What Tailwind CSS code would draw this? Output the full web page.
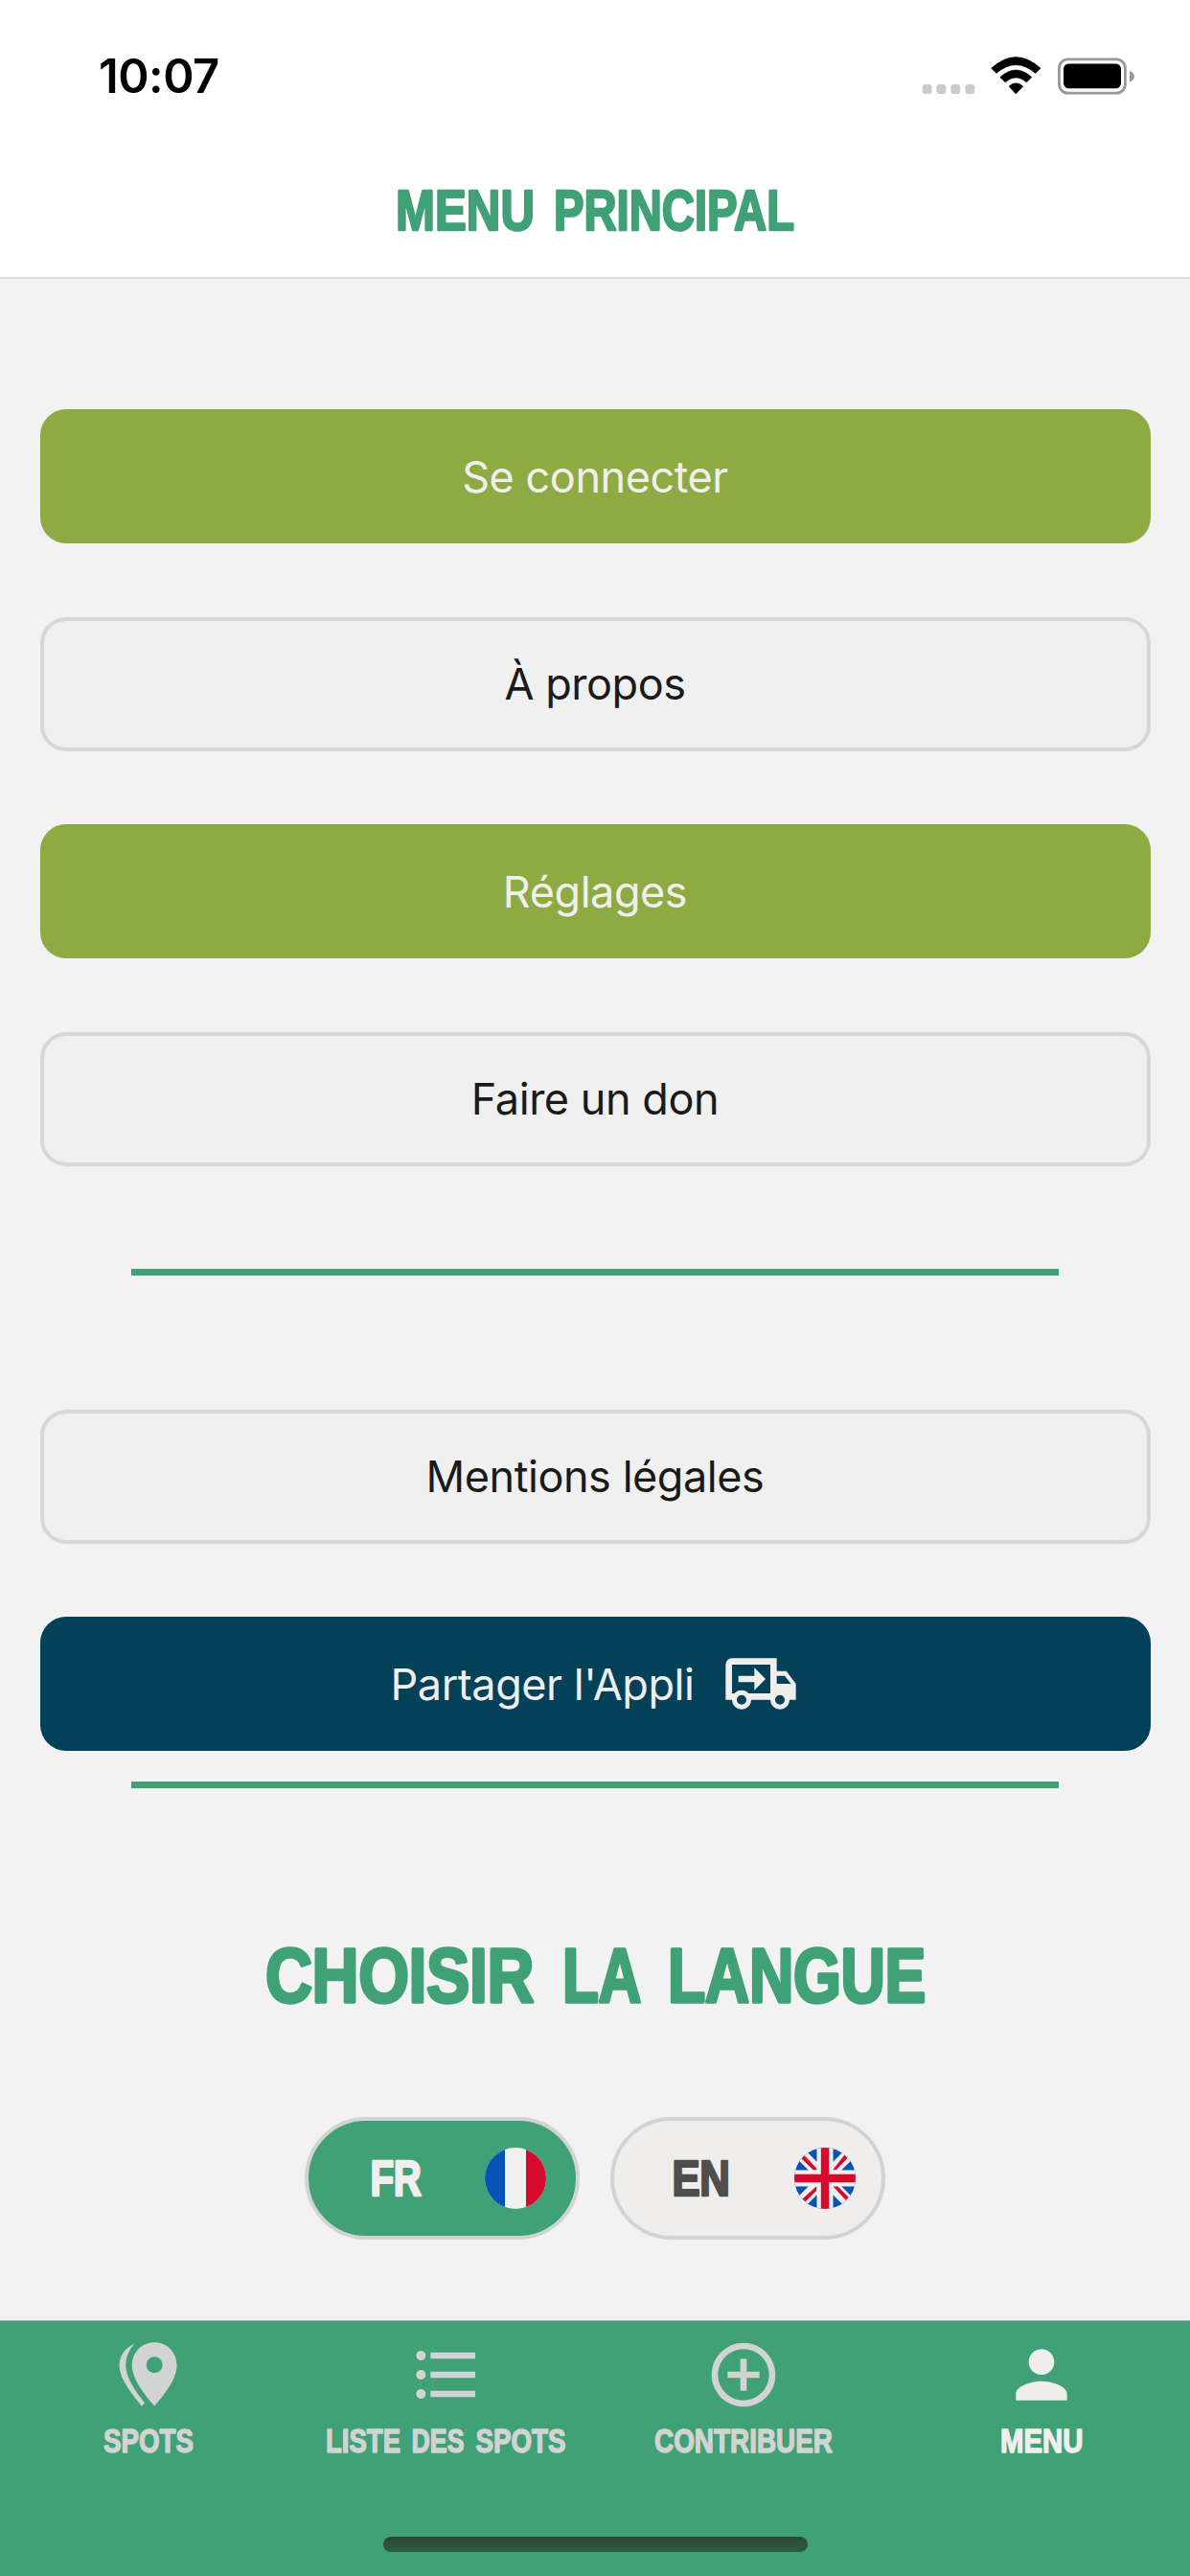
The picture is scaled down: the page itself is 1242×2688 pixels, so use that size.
<!DOCTYPE html>
<html lang="fr">
<head>
<meta charset="utf-8">
<title>Menu principal</title>
<script src="https://cdn.jsdelivr.net/npm/@tailwindcss/browser@4"></script>
</head>
<body class="flex flex-col w-[1242px] h-[2688px] overflow-hidden bg-[#f2f2f2] font-[Inter,sans-serif]">
<header class="h-[291px] shrink-0 bg-white border-b-2 border-[#dedede] flex flex-col">
  <div class="h-[158px] pl-[103px] pr-[58px] flex items-center justify-between">
    <span class="text-[49px] leading-none font-semibold text-black tracking-[-0.5px]">10:07</span>
    <svg class="w-[222px] h-[40px]" viewBox="962 58 222 40">
      <g fill="#c9cccb"><rect x="962.8" y="87" width="9.8" height="10" rx="3"/><rect x="977.5" y="87" width="9.8" height="10" rx="3"/><rect x="992.4" y="87" width="9.8" height="10" rx="3"/><rect x="1007.4" y="87" width="9.8" height="10" rx="3"/></g>
      <path d="M1034.7 70.2Q1060.3 47 1086 70.2L1080.7 75.4Q1060.3 58 1040 75.4ZM1043.8 79.6Q1060.3 64.5 1076.8 79.6L1071.4 84.8Q1060.3 75 1049.2 84.8ZM1053 89Q1060.3 82.5 1067.7 89L1060.3 97Z" stroke="#000" stroke-width=".6" stroke-linejoin="round"/>
      <rect x="1105.4" y="60.8" width="69" height="35.4" rx="9.5" fill="none" stroke="#999" stroke-width="2.8"/>
      <rect x="1110" y="65.5" width="60" height="25.8" rx="5.5"/>
      <path d="M1179 73v11.500q5-2 5-5.750t-5-5.750z" fill="#999"/>
    </svg>
  </div>
  <h1 class="flex justify-center">
    <svg class="w-[420px] h-[60px] mt-[32px] overflow-visible" viewBox="411 190 420 60" fill="#40a076" stroke="#40a076" stroke-width="2.500" stroke-linejoin="round" font-family="Liberation Sans" font-weight="700" font-size="60">
      <text x="413" y="239.500" textLength="145" lengthAdjust="spacingAndGlyphs">MENU</text><text x="578" y="239.500" textLength="251" lengthAdjust="spacingAndGlyphs">PRINCIPAL</text>
    </svg>
  </h1>
</header>
<main class="flex-1 flex flex-col items-center text-[45px] leading-none tracking-[-0.45px] text-[#1a1a1a]">
  <div class="flex flex-col gap-[76.600px] mt-[136px] w-[1159px]">
    <button class="h-[140px] rounded-[27px] bg-[#8eab43] text-[#f0efee]">Se connecter</button>
    <button class="h-[140px] rounded-[27px] bg-[#f0f0f0] border-4 border-[#d6d7d6]">À propos</button>
    <button class="h-[140px] rounded-[27px] bg-[#8eab43] text-[#f0efee]">Réglages</button>
    <button class="h-[140px] rounded-[27px] bg-[#f0f0f0] border-4 border-[#d6d7d6]">Faire un don</button>
  </div>
  <div class="mt-[107px] w-[968px] h-[7px] bg-[#40a076]"></div>
  <div class="flex flex-col gap-[76.600px] mt-[140px] w-[1159px]">
    <button class="h-[140px] rounded-[27px] bg-[#f0f0f0] border-4 border-[#d6d7d6]">Mentions légales</button>
    <button class="h-[140px] rounded-[27px] bg-[#034159] text-[#f0efee] flex items-center justify-center gap-[30px]">Partager l'Appli
      <svg class="w-[80px] h-[80px]" viewBox="0 0 24 24" fill="#f0efee"><path fill-rule="evenodd" d="M3 4a2 2 0 0 0-2 2v11h2a3 3 0 0 0 6 0h6a3 3 0 0 0 6 0h2v-5l-3-4h-3V4ZM3 6h12v9H8.240A3 3 0 0 0 3.760 15H3ZM17 9.500h2.500L21.470 12H17ZM6 15.500a1.500 1.500 0 1 1 0 3 1.500 1.500 0 0 1 0-3ZM18 15.500a1.500 1.500 0 1 1 0 3 1.500 1.500 0 0 1 0-3Z"/><path d="M10 7l3.500 3.500L10 14v-2.500H5v-2h5Z"/></svg>
    </button>
  </div>
  <div class="mt-[32px] w-[968px] h-[7px] bg-[#40a076]"></div>
  <svg class="mt-[153px] w-[700px] h-[84px] overflow-visible" viewBox="271 2020 700 84" fill="#40a076" stroke="#40a076" stroke-width="3.500" stroke-linejoin="round" font-family="Liberation Sans" font-weight="700" font-size="80">
    <text x="277" y="2090" textLength="280" lengthAdjust="spacingAndGlyphs">CHOISIR</text><text x="587" y="2090" textLength="82" lengthAdjust="spacingAndGlyphs">LA</text><text x="697" y="2090" textLength="269" lengthAdjust="spacingAndGlyphs">LANGUE</text>
  </svg>
  <div class="flex gap-[32px] mt-[106px]">
    <button class="w-[287px] h-[128px] rounded-full bg-[#40a076] border-4 border-[#d2d4d3] flex items-center pl-[64px]">
      <svg class="w-[56px] h-[56px] overflow-visible" viewBox="385 2245 56 56" fill="#f0efee" stroke="#f0efee" stroke-width="2.500" stroke-linejoin="round" font-family="Liberation Sans" font-weight="700" font-size="51"><text x="385.500" y="2290.500" textLength="53" lengthAdjust="spacingAndGlyphs">FR</text></svg>
      <svg class="w-[64px] h-[64px] ml-[64px] rounded-full" viewBox="0 0 64 64"><path fill="#f0f0f0" d="M0 0h64v64H0z"/><path fill="#0652b5" d="M0 0h21v64H0z"/><path fill="#d80a2b" d="M43 0h21v64H43z"/></svg>
    </button>
    <button class="w-[287px] h-[128px] rounded-full bg-[#efeeec] border-4 border-[#d2d4d3] flex items-center pl-[60px]">
      <svg class="w-[62px] h-[56px] overflow-visible" viewBox="700 2245 62 56" fill="#4e4e4e" stroke="#4e4e4e" stroke-width="2.500" stroke-linejoin="round" font-family="Liberation Sans" font-weight="700" font-size="51"><text x="700.500" y="2290.500" textLength="60" lengthAdjust="spacingAndGlyphs">EN</text></svg>
      <svg class="w-[64px] h-[64px] ml-[66px] rounded-full" viewBox="0 0 64 64"><path fill="#0652b5" d="M0 0h64v64H0z"/><path stroke="#f0f0f0" stroke-width="12.500" d="M0 0l64 64M64 0L0 64"/><path fill="#d80a2b" d="M7.500 11.500L10.500 8 25 23.500H20ZM40 23.500L52.500 7.500 55.500 11 43.500 23.500H40ZM8.500 53.500L23.500 40V44.500L11.500 56.500ZM40 40h5L56.500 51.500 54 55Z"/><path stroke="#f0f0f0" stroke-width="17" d="M32 0v64M0 32h64"/><path stroke="#d80a2b" stroke-width="8.400" d="M32 0v64M0 32h64"/></svg>
    </button>
  </div>
</main>
<nav class="relative h-[267px] shrink-0 bg-[#40a076] border-t border-[#9ebdaf] grid grid-cols-4">
  <a class="flex flex-col items-center pt-[16px]">
    <svg class="w-[80px] h-[80px]" viewBox="115 2438 80 80" fill="#d2d3d3"><path fill-rule="evenodd" d="M161.200 2444.300c-13 0-23.400 10.300-23.400 24 0 14 13 30.500 23.400 42.400 10.400-11.900 23.400-28.400 23.400-42.400 0-13.700-10.400-24-23.400-24Zm0 14.900a8.500 8.500 0 1 1 0 17 8.500 8.500 0 0 1 0-17Z"/><path d="M140.500 2445.500c-9 4-16 12-16 22.800 0 13.500 13 30 23.500 42.400l3-3.500c-10-12-19.700-26.500-19.700-38.900 0-9 3.500-16.500 9.200-22.800Z"/></svg>
    <svg class="w-[100px] h-[36px] mt-[11px] overflow-visible" viewBox="105.500 2530 100 36" fill="#d2d3d3" stroke="#d2d3d3" stroke-width="1.500" stroke-linejoin="round" font-family="Liberation Sans" font-weight="700" font-size="35"><text x="108.500" y="2560" textLength="94" lengthAdjust="spacingAndGlyphs">SPOTS</text></svg>
  </a>
  <a class="flex flex-col items-center pt-[16px]">
    <svg class="w-[80px] h-[80px]" viewBox="0 0 24 24" fill="#d2d3d3"><path d="M4 10.500c-.83 0-1.500.67-1.500 1.500s.67 1.500 1.500 1.500 1.500-.67 1.500-1.500-.67-1.500-1.500-1.500zm0-6c-.83 0-1.500.67-1.500 1.500S3.170 7.500 4 7.500 5.500 6.830 5.500 6 4.830 4.500 4 4.500zm0 12c-.83 0-1.500.680-1.500 1.500s.680 1.500 1.500 1.500 1.500-.680 1.500-1.500-.670-1.500-1.500-1.500zM7 19h14v-2H7v2zm0-6h14v-2H7v2zm0-8v2h14V5H7z"/></svg>
    <svg class="w-[254px] h-[36px] mt-[11px] overflow-visible" viewBox="339 2530 254 36" fill="#d2d3d3" stroke="#d2d3d3" stroke-width="1.500" stroke-linejoin="round" font-family="Liberation Sans" font-weight="700" font-size="35"><text x="340" y="2560" textLength="78" lengthAdjust="spacingAndGlyphs">LISTE</text><text x="429.500" y="2560" textLength="55" lengthAdjust="spacingAndGlyphs">DES</text><text x="496.500" y="2560" textLength="94" lengthAdjust="spacingAndGlyphs">SPOTS</text></svg>
  </a>
  <a class="flex flex-col items-center pt-[16px]">
    <svg class="w-[80px] h-[80px]" viewBox="0 0 24 24" fill="#d2d3d3"><path d="M13 7h-2v4H7v2h4v4h2v-4h4v-2h-4V7zm-1-5C6.480 2 2 6.480 2 12s4.480 10 10 10 10-4.480 10-10S17.520 2 12 2zm0 18c-4.410 0-8-3.590-8-8s3.590-8 8-8 8 3.590 8 8-3.590 8-8 8z"/></svg>
    <svg class="w-[190px] h-[36px] mt-[11px] overflow-visible" viewBox="681.500 2530 190 36" fill="#d2d3d3" stroke="#d2d3d3" stroke-width="1.500" stroke-linejoin="round" font-family="Liberation Sans" font-weight="700" font-size="35"><text x="683.500" y="2560" textLength="186" lengthAdjust="spacingAndGlyphs">CONTRIBUER</text></svg>
  </a>
  <a class="flex flex-col items-center pt-[16px]">
    <svg class="w-[80px] h-[80px]" viewBox="0 0 24 24" fill="#f0efee"><path d="M12 12c2.210 0 4-1.790 4-4s-1.790-4-4-4-4 1.790-4 4 1.790 4 4 4zm0 2c-2.670 0-8 1.340-8 4v2h16v-2c0-2.660-5.330-4-8-4z"/></svg>
    <svg class="w-[90px] h-[36px] mt-[11px] overflow-visible" viewBox="1042 2530 90 36" fill="#f0efee" stroke="#f0efee" stroke-width="1.500" stroke-linejoin="round" font-family="Liberation Sans" font-weight="700" font-size="35"><text x="1044" y="2560" textLength="86.500" lengthAdjust="spacingAndGlyphs">MENU</text></svg>
  </a>
  <div class="absolute left-[400px] bottom-[25px] w-[443px] h-4 rounded-full bg-gradient-to-b from-[#2a4738] to-[#2f5c47]"></div>
</nav>
</body>
</html>
